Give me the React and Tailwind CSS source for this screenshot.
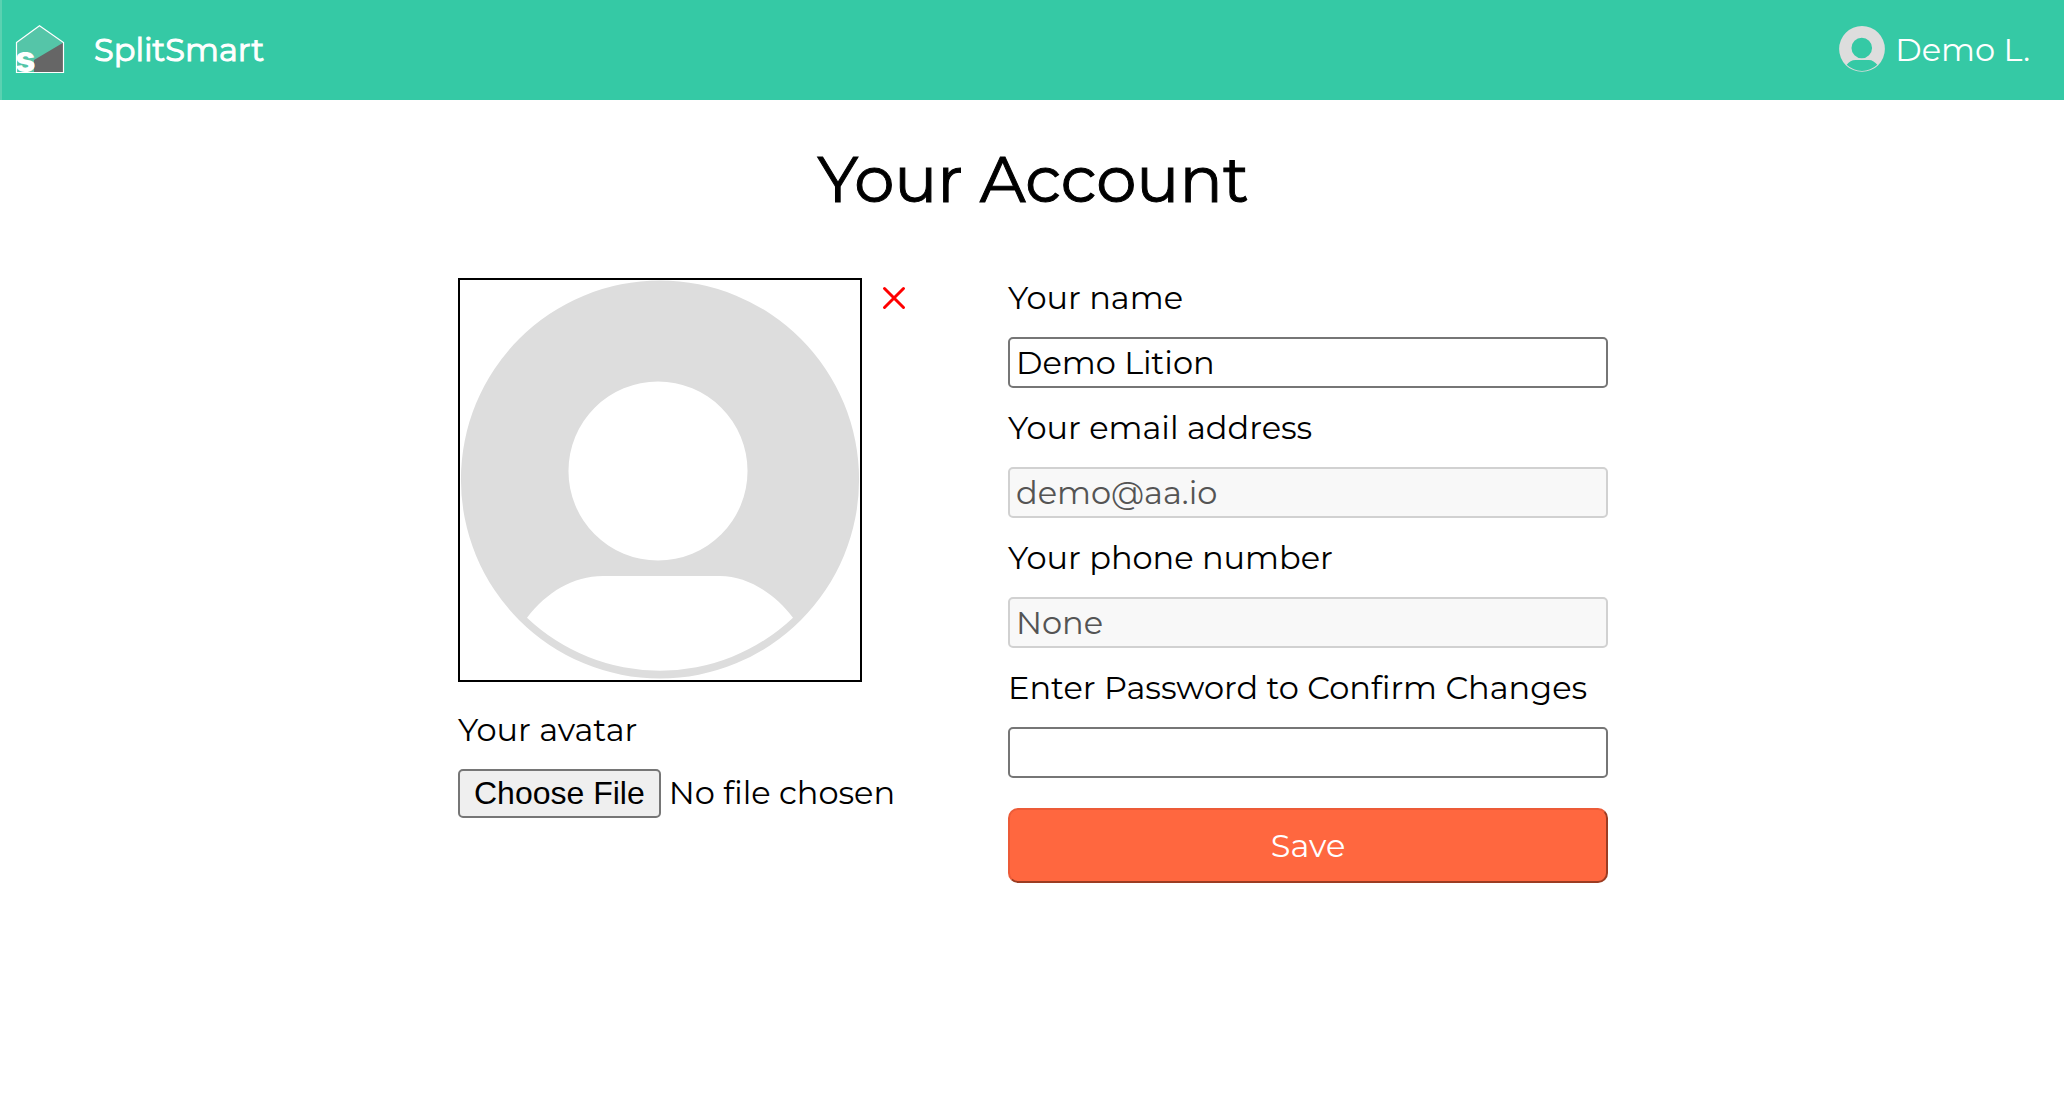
import React, { useState } from "react";

function AvatarIcon({ className }) {
  return (
    <svg viewBox="0 0 400 400" className={className} aria-hidden="true">
      <path
        fill="#dddddd"
        fillRule="evenodd"
        d="M200 0.5a199 199 0 1 1 0 398a199 199 0 1 1 0 -398Z M198 101.5a89.5 89.5 0 1 0 0 179a89.5 89.5 0 1 0 0 -179Z M67 337.7C87 312 113 296 143 296H260C288 296 315 314 333 337.7A193.4 193.4 0 0 1 67 337.7Z"
      />
    </svg>
  );
}

function Logo() {
  return (
    <svg viewBox="0 0 48 48" className="size-12 overflow-visible" aria-hidden="true">
      <path d="M0.5 17.5L23.5 0.8L47.5 17.5V47.5H0.5Z" fill="#55c5a8" />
      <path d="M47.5 17.5L18 35V47.5H47.5Z" fill="#666666" />
      <text
        x="-1"
        y="47"
        fontSize="36"
        fontWeight="800"
        fill="#ffffff"
        fontFamily="Inter, sans-serif"
      >
        s
      </text>
      <path
        d="M0.5 17.5L23.5 0.8L47.5 17.5V47.5H0.5Z"
        fill="none"
        stroke="#ffffff"
        strokeWidth="1.2"
      />
    </svg>
  );
}

function Field({ id, label, ...props }) {
  return (
    <div className="flex flex-col gap-5">
      <label htmlFor={id}>{label}</label>
      <input
        id={id}
        className="h-[51px] w-full rounded-[5px] border-2 border-[#767676] bg-white px-1.5 text-black disabled:border-[#d1d1d1] disabled:bg-[#f8f8f8] disabled:text-[#545454]"
        {...props}
      />
    </div>
  );
}

export default function App() {
  const [name, setName] = useState("Demo Lition");
  return (
    <div className="min-h-screen bg-white font-[Montserrat,sans-serif] text-[32px] leading-[39px] text-black">
      <header className="flex h-[100px] items-center justify-between border-l-2 border-[#5bd1b1] bg-[#35c9a5] pr-[34px] pb-0.5 pl-3.5 text-white">
        <a href="#home" className="flex items-center gap-[30px]">
          <Logo />
          <span className="[-webkit-text-stroke:1px]">SplitSmart</span>
        </a>
        <button type="button" className="flex items-center gap-2.5">
          <AvatarIcon className="size-[46px]" />
          <span>Demo L.</span>
        </button>
      </header>

      <main className="flex flex-col items-center pt-10 pr-8 pb-16 pl-[34px]">
        <h1 className="text-[64px] leading-[78px] [-webkit-text-stroke:1px]">Your Account</h1>
        <form
          className="mt-[60px] flex flex-wrap gap-x-[100px] gap-y-10"
          onSubmit={(e) => e.preventDefault()}
        >
          <div className="w-[450px]">
            <div className="flex items-start gap-5">
              <div className="size-[404px] shrink-0 border-2 border-black">
                <AvatarIcon className="size-full" />
              </div>
              <button type="button" aria-label="Remove avatar" className="mt-2">
                <svg
                  viewBox="0 0 24 24"
                  className="size-6"
                  fill="none"
                  stroke="#ff0000"
                  strokeWidth="3"
                  strokeLinecap="round"
                >
                  <path d="M2.5 2.5L21.5 21.5M21.5 2.5L2.5 21.5" />
                </svg>
              </button>
            </div>
            <label htmlFor="avatar" className="mt-7 block">
              Your avatar
            </label>
            <input
              id="avatar"
              type="file"
              className="mt-5 block w-full file:mr-2 file:h-[49px] file:rounded-[5px] file:border-2 file:border-solid file:border-[#767676] file:bg-[#efefef] file:px-3.5 file:font-['Liberation_Sans',sans-serif] file:text-[32px] file:leading-[39px] file:text-black"
            />
          </div>

          <div className="flex w-[600px] flex-col gap-5">
            <Field
              id="name"
              label="Your name"
              type="text"
              value={name}
              onChange={(e) => setName(e.target.value)}
            />
            <Field id="email" label="Your email address" type="email" defaultValue="demo@aa.io" disabled />
            <Field id="phone" label="Your phone number" type="text" defaultValue="None" disabled />
            <Field id="password" label="Enter Password to Confirm Changes" type="password" />
            <button
              type="submit"
              className="mt-2.5 h-[75px] rounded-[10px] border-2 border-t-[#ec5b38] border-r-[#9c3c22] border-b-[#9c3c22] border-l-[#ec5b38] bg-[#ff673f] text-white"
            >
              Save
            </button>
          </div>
        </form>
      </main>
    </div>
  );
}
